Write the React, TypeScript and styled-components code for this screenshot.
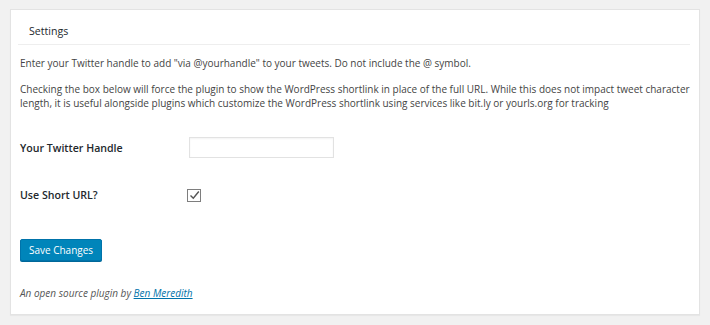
import React from "react";
import styled, { createGlobalStyle } from "styled-components";

const Global = createGlobalStyle`
  html, body { margin: 0; padding: 0; background: #f1f1f1; }
  body { font-family: "Open Sans", "Noto Sans", sans-serif; color: #444; }
`;

const Page = styled.div`
  padding: 9px 10px 10px 10px;
  width: 710px;
  box-sizing: border-box;
`;

const Panel = styled.div`
  background: #fff;
  border: 1px solid #e3e3e3;
  box-shadow: 0 1px 1px rgba(0, 0, 0, 0.04);
  height: 306px;
  box-sizing: border-box;
`;

const Header = styled.h2`
  margin: 0 9px 0 7px;
  height: 35px;
  padding: 14px 0 0 11px;
  box-sizing: border-box;
  border-bottom: 1px solid #eeeeee;
  font-size: 10.6px;
  line-height: 14px;
  font-weight: 400;
  color: #23282d;
`;

const Body = styled.div`
  padding: 11px 9px 0 9px;
`;

const Para = styled.p`
  margin: 0 0 12px 0;
  font-size: 10px;
  line-height: 14px;
  color: #444;
`;

const FormTable = styled.div`
  display: grid;
  grid-template-columns: 169px 1fr;
  row-gap: 30px;
  align-items: center;
  margin-top: 27px;
`;

const Label = styled.div`
  font-size: 10.6px;
  font-weight: 600;
  color: #23282d;
`;

const Field = styled.div`
  display: flex;
  align-items: center;
`;

const TextInput = styled.input`
  width: 145px;
  height: 21px;
  box-sizing: border-box;
  border: 1px solid #e2e2e2;
  box-shadow: inset 0 1px 2px rgba(0, 0, 0, 0.05);
  background: #fff;
  margin: 0;
`;

const CheckBox = styled.span`
  width: 14px;
  height: 13px;
  box-sizing: border-box;
  border: 1px solid #7e7e7e;
  margin-left: -2px;
  display: flex;
  align-items: center;
  justify-content: center;
  background: #fff;
`;

const Button = styled.button`
  margin-top: 37px;
  width: 82px;
  height: 22px;
  background: #0085ba;
  border: 1px solid #0073aa;
  border-radius: 2px;
  box-shadow: 0 1px 0 #006799;
  color: #fff;
  font-family: "Open Sans", "Noto Sans", sans-serif;
  font-size: 10px;
  padding: 0;
  display: flex;
  align-items: center;
  justify-content: center;
`;

const Footer = styled.p`
  margin: 25px 0 0 0;
  font-size: 10px;
  line-height: 14px;
  font-style: italic;
  color: #555;
`;

const Link = styled.a`
  color: #0073aa;
  text-decoration: underline;
`;

export default function App() {
  return (
    <>
      <Global />
      <Page>
        <Panel>
          <Header>Settings</Header>
          <Body>
            <Para>
              Enter your Twitter handle to add "via @yourhandle" to your tweets. Do not include the @ symbol.
            </Para>
            <Para>
              Checking the box below will force the plugin to show the WordPress shortlink in place of the full URL. While this does not impact tweet character length, it is useful alongside plugins which customize the WordPress shortlink using services like bit.ly or yourls.org for tracking
            </Para>
            <FormTable>
              <Label>Your Twitter Handle</Label>
              <Field>
                <TextInput type="text" />
              </Field>
              <Label>Use Short URL?</Label>
              <Field>
                <CheckBox>
                  <svg width="11" height="11" viewBox="0 0 11 11">
                    <path d="M1.5 5.5 L4.3 8.3 L9.8 1.5" fill="none" stroke="#555" strokeWidth="1.4" />
                  </svg>
                </CheckBox>
              </Field>
            </FormTable>
            <Button>Save Changes</Button>
            <Footer>
              An open source plugin by <Link href="#">Ben Meredith</Link>
            </Footer>
          </Body>
        </Panel>
      </Page>
    </>
  );
}
